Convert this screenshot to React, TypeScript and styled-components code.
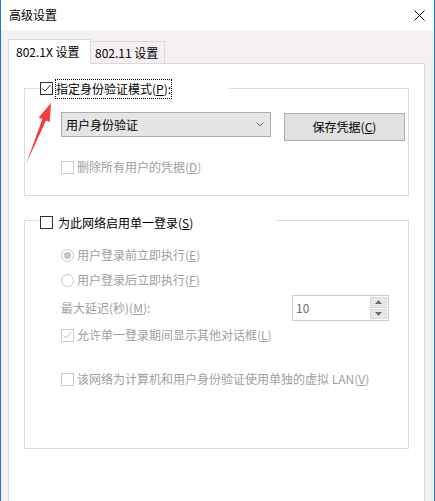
import React from "react"
import styled, { createGlobalStyle } from "styled-components"

const GlobalStyle = createGlobalStyle`
  html, body {
    margin: 0;
    padding: 0;
    background: #fff;
  }

  body {
    font-family: "Noto Sans CJK SC", "Microsoft YaHei", sans-serif;
    font-size: 12px;
    color: #000;
    text-autospace: no-autospace;
  }

  * {
    box-sizing: border-box;
  }
`

const Window = styled.div`
  position: relative;
  width: 435px;
  height: 501px;
  display: flex;
  flex-direction: column;
  border-left: 1px solid #1a7fd4;
  border-right: 1px solid #1a7fd4;
  overflow: hidden;
`

const TitleBar = styled.div`
  flex: none;
  height: 30px;
  display: flex;
  align-items: center;
  justify-content: space-between;
  padding: 0 9px 0 8px;
  background: #fff;
`

const Title = styled.span`
  line-height: 1;
`

const Body = styled.div`
  flex: 1;
  display: flex;
  flex-direction: column;
  padding: 9px 9px 0 7px;
  background: #f5f0f4;
`

const TabBar = styled.div`
  flex: none;
  height: 24px;
  display: flex;
  align-items: flex-end;
  position: relative;
  z-index: 1;
`

const Tab = styled.div<{ $active?: boolean }>`
  display: flex;
  align-items: center;
  line-height: 1;
  border: 1px solid #d9d9d9;
  border-bottom: none;
  ${({ $active }) => $active
    ? `
      width: 83px;
      height: 25px;
      margin-bottom: -1px;
      padding-left: 7px;
      background: #fff;
    `
    : `
      width: 74px;
      height: 22px;
      padding-left: 4px;
      border-left: none;
      background: #f5f0f4;
    `}
`

const Panel = styled.div`
  flex: 1;
  display: flex;
  flex-direction: column;
  padding: 14px 15px 0 15px;
  background: #fff;
  border: 1px solid #d9d9d9;
  border-bottom: none;
`

const Group = styled.fieldset<{ $top?: number }>`
  margin: ${({ $top }) => $top ?? 0}px 0 0 0;
  padding: 0;
  min-width: 0;
  border: 1px solid #dcdcdc;
`

const GroupLegend = styled.legend<{ $width: number; $shift?: number }>`
  width: ${({ $width }) => $width}px;
  height: 21px;
  margin-left: 14px;
  padding: ${({ $shift }) => $shift ?? 0}px 0 0 1px;
  display: flex;
  align-items: center;
  background: #fff;
`

const LegendText = styled.span<{ $focused?: boolean }>`
  display: flex;
  align-items: center;
  height: 20px;
  line-height: 1;
  margin-left: ${({ $focused }) => ($focused ? 2 : 4)}px;
  padding: 0 1px;
  outline: ${({ $focused }) => ($focused ? "1px dotted #000" : "none")};
  outline-offset: -1px;
`

const GroupBody = styled.div<{ $pt: number; $pb: number }>`
  display: flex;
  flex-direction: column;
  padding: ${({ $pt }) => $pt}px 0 ${({ $pb }) => $pb}px 36px;
`

const Row = styled.div<{ $mt?: number }>`
  display: flex;
  align-items: flex-start;
  margin-top: ${({ $mt }) => $mt ?? 0}px;
`

const Option = styled.div<{ $mt?: number; $disabled?: boolean }>`
  height: 20px;
  display: flex;
  align-items: center;
  margin-top: ${({ $mt }) => $mt ?? 0}px;
  color: ${({ $disabled }) => ($disabled ? "#a0a0a0" : "#000")};
  line-height: 1;
`

const OptionText = styled.span`
  margin-left: 3px;
  white-space: nowrap;
`

const Key = styled.u`
  text-underline-offset: 1px;
`

const Box = styled.span<{ $disabled?: boolean }>`
  flex: none;
  width: 13px;
  height: 13px;
  display: flex;
  align-items: center;
  justify-content: center;
  border: 1px solid ${({ $disabled }) => ($disabled ? "#cccccc" : "#333333")};
  background: #fff;
`

const RadioDot = styled.span<{ $checked?: boolean }>`
  flex: none;
  width: 13px;
  height: 13px;
  display: flex;
  align-items: center;
  justify-content: center;
  border: 1px solid #c8c8c8;
  border-radius: 50%;
  background: #fff;

  &::after {
    content: '';
    width: 7px;
    height: 7px;
    border-radius: 50%;
    background: ${({ $checked }) => ($checked ? "#c4c4c4" : "transparent")};
  }
`

const Select = styled.div`
  width: 210px;
  height: 25px;
  display: flex;
  align-items: center;
  justify-content: space-between;
  padding: 0 6px 0 4px;
  background: #e5e5e5;
  border: 1px solid #acacac;
  line-height: 1;
`

const Button = styled.div`
  width: 121px;
  height: 28px;
  margin: 1px 0 0 13px;
  display: flex;
  align-items: center;
  justify-content: center;
  background: #e1e1e1;
  border: 1px solid #adadad;
  line-height: 1;
`

const SpinLabel = styled.span`
  width: 231px;
  color: #a0a0a0;
  line-height: 1;
  align-self: center;
`

const Spin = styled.div`
  width: 97px;
  height: 26px;
  display: flex;
  border: 1px solid #cacaca;
  background: #fff;
`

const SpinValue = styled.span`
  flex: 1;
  display: flex;
  align-items: center;
  padding-left: 3px;
  color: #6d6d6d;
  line-height: 1;
`

const SpinButtons = styled.div`
  width: 18px;
  display: flex;
  flex-direction: column;
  gap: 1px;
  padding: 1px 1px 1px 0;
`

const SpinButton = styled.div`
  flex: 1;
  display: flex;
  align-items: center;
  justify-content: center;
  background: #e8e8e8;
  border: 1px solid #dadada;
`

const Arrow = styled.svg`
  position: absolute;
  left: 19px;
  top: 98px;
  pointer-events: none;
`

const Check: React.FC<{ color: string }> = ({ color }) => (
  <svg width="11" height="11" viewBox="0 0 11 11">
    <polyline points="1.5,5.5 4,8 9.5,2" fill="none" stroke={color} strokeWidth="1" />
  </svg>
)

const CheckBox: React.FC<{ checked?: boolean; disabled?: boolean }> = ({ checked, disabled }) => (
  <Box $disabled={disabled}>
    {checked && <Check color={disabled ? "#c0c0c0" : "#333"} />}
  </Box>
)

const Triangle: React.FC<{ up?: boolean }> = ({ up }) => (
  <svg width="7" height="4" viewBox="0 0 7 4">
    <polygon points={up ? "0,4 7,4 3.5,0" : "0,0 7,0 3.5,4"} fill="#6d6d6d" />
  </svg>
)

export default function App() {
  return (
    <>
      <GlobalStyle />
      <Window>
        <TitleBar>
          <Title>高级设置</Title>
          <svg width="11" height="11" viewBox="0 0 11 11">
            <path d="M0.5 0.5 L10.5 10.5 M10.5 0.5 L0.5 10.5" stroke="#000" strokeWidth="1" />
          </svg>
        </TitleBar>

        <Body>
          <TabBar>
            <Tab $active>802.1X 设置</Tab>
            <Tab>802.11 设置</Tab>
          </TabBar>

          <Panel>
            <Group>
              <GroupLegend $width={190}>
                <CheckBox checked />
                <LegendText $focused>指定身份验证模式(<Key>P</Key>):</LegendText>
              </GroupLegend>
              <GroupBody $pt={13} $pb={18}>
                <Row>
                  <Select>
                    用户身份验证
                    <svg width="8" height="5" viewBox="0 0 8 5">
                      <polyline points="0.5,0.5 4,4 7.5,0.5" fill="none" stroke="#606060" strokeWidth="1" />
                    </svg>
                  </Select>
                  <Button>保存凭据(<Key>C</Key>)</Button>
                </Row>
                <Option $mt={16} $disabled>
                  <CheckBox disabled />
                  <OptionText>删除所有用户的凭据(<Key>D</Key>)</OptionText>
                </Option>
              </GroupBody>
            </Group>

            <Group $top={14}>
              <GroupLegend $width={237} $shift={4}>
                <CheckBox />
                <LegendText>为此网络启用单一登录(<Key>S</Key>)</LegendText>
              </GroupLegend>
              <GroupBody $pt={14} $pb={59}>
                <Option $disabled>
                  <RadioDot $checked />
                  <OptionText>用户登录前立即执行(<Key>E</Key>)</OptionText>
                </Option>
                <Option $mt={5} $disabled>
                  <RadioDot />
                  <OptionText>用户登录后立即执行(<Key>F</Key>)</OptionText>
                </Option>
                <Row $mt={5}>
                  <SpinLabel>最大延迟(秒)(<Key>M</Key>):</SpinLabel>
                  <Spin>
                    <SpinValue>10</SpinValue>
                    <SpinButtons>
                      <SpinButton><Triangle up /></SpinButton>
                      <SpinButton><Triangle /></SpinButton>
                    </SpinButtons>
                  </Spin>
                </Row>
                <Option $mt={4} $disabled>
                  <CheckBox checked disabled />
                  <OptionText>允许单一登录期间显示其他对话框(<Key>L</Key>)</OptionText>
                </Option>
                <Option $mt={24} $disabled>
                  <CheckBox disabled />
                  <OptionText>该网络为计算机和用户身份验证使用单独的虚拟 LAN(<Key>V</Key>)</OptionText>
                </Option>
              </GroupBody>
            </Group>
          </Panel>
        </Body>

        <Arrow width="40" height="70" viewBox="0 0 40 70">
          <polygon points="31,5 18.7,19.4 22.4,21 6,66 26,22.5 29.7,24" fill="#f53b3b" />
        </Arrow>
      </Window>
    </>
  )
}
